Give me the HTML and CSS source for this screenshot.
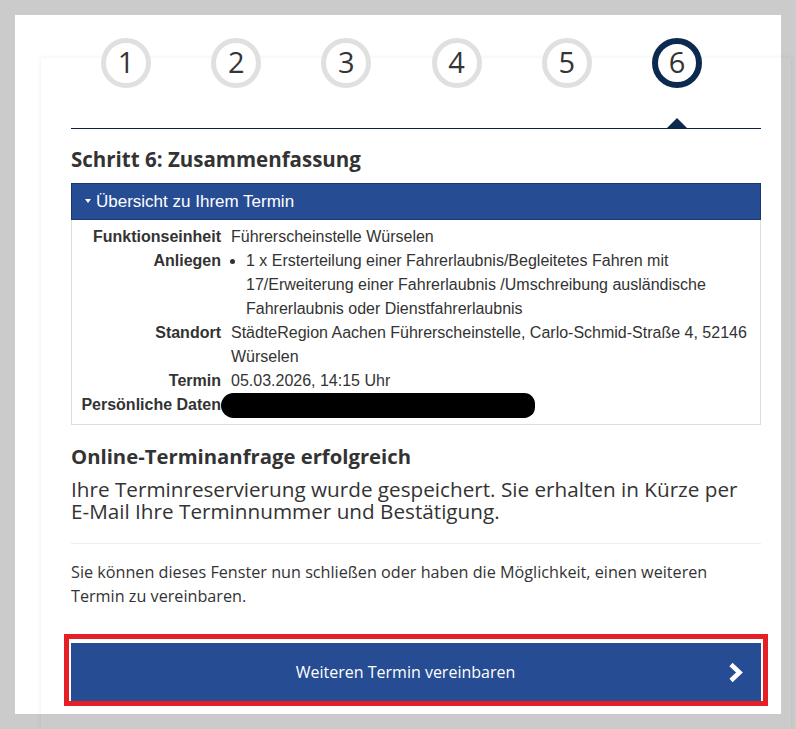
FILE: index.html
```html
<!DOCTYPE html>
<html lang="de">
<head>
<meta charset="utf-8">
<title>Zusammenfassung</title>
<link rel="stylesheet" href="styles.css">
</head>
<body>
<div class="panel">
  <div class="card">
    <div class="steps">
      <div class="step">1</div>
      <div class="step">2</div>
      <div class="step">3</div>
      <div class="step">4</div>
      <div class="step">5</div>
      <div class="step active">6</div>
    </div>

    <h2 class="title">Schritt 6: Zusammenfassung</h2>

    <div class="accordion">
      <div class="acc-head"><span class="caret"></span>Übersicht zu Ihrem Termin</div>
      <div class="acc-body">
        <div class="row">
          <div class="label">Funktionseinheit</div>
          <div class="value">Führerscheinstelle Würselen</div>
        </div>
        <div class="row">
          <div class="label">Anliegen</div>
          <div class="value">
            <ul class="list">
              <li>1 x Ersterteilung einer Fahrerlaubnis/Begleitetes Fahren mit 17/Erweiterung einer Fahrerlaubnis /Umschreibung ausländische Fahrerlaubnis oder Dienstfahrerlaubnis</li>
            </ul>
          </div>
        </div>
        <div class="row">
          <div class="label">Standort</div>
          <div class="value">StädteRegion Aachen Führerscheinstelle, Carlo-Schmid-Straße 4, 52146 Würselen</div>
        </div>
        <div class="row">
          <div class="label">Termin</div>
          <div class="value">05.03.2026, 14:15 Uhr</div>
        </div>
        <div class="row">
          <div class="label">Persönliche Daten</div>
          <div class="value redacted"><span class="blob"></span></div>
        </div>
      </div>
    </div>

    <h2 class="title2">Online-Terminanfrage erfolgreich</h2>
    <p class="lead">Ihre Terminreservierung wurde gespeichert. Sie erhalten in Kürze per <span class="nobr">E-Mail</span> Ihre Terminnummer und Bestätigung.</p>
    <hr class="sep">
    <p class="note">Sie können dieses Fenster nun schließen oder haben die Möglichkeit, einen weiteren Termin zu vereinbaren.</p>

    <div class="mark">
      <button class="btn" type="button">
        <span class="btn-text">Weiteren Termin vereinbaren</span>
        <svg class="chev" width="15" height="23" viewBox="0 0 15 23" aria-hidden="true">
          <polyline points="3,3.5 11.5,11.5 3,19.5" fill="none" stroke="#ffffff" stroke-width="4.6" stroke-linejoin="miter" stroke-linecap="butt"/>
        </svg>
      </button>
    </div>
  </div>
</div>
</body>
</html>
```

FILE: styles.css
```css
html, body {
  margin: 0;
  padding: 0;
}
body {
  background: #cbcbcb;
  width: 796px;
  height: 729px;
  overflow: hidden;
  font-family: "Open Sans", "Noto Sans", sans-serif;
  color: #333333;
}
.panel {
  margin: 15px 0 0 15px;
  width: 766px;
  height: 699px;
  background: #ffffff;
  display: flow-root;
}
.card {
  margin: 43px 0 0 26px;
  width: 750px;
  height: 700px;
  box-sizing: border-box;
  padding: 0 30px;
  display: flex;
  flex-direction: column;
  box-shadow: 0 0 5px rgba(0, 0, 0, 0.07);
}

/* steps */
.steps {
  margin-top: -20px;
  height: 90px;
  border-bottom: 1px solid #0d2344;
  display: flex;
  gap: 60.2px;
  padding-left: 30px;
}
.step {
  width: 50px;
  height: 50px;
  box-sizing: border-box;
  border: 5px solid #e0e0e0;
  border-radius: 50%;
  background: #ffffff;
  display: flex;
  align-items: center;
  justify-content: center;
  font-size: 29px;
  line-height: 1;
  padding-bottom: 3px;
  color: #353535;
  position: relative;
  flex: none;
}
.step.active {
  border: 6px solid #0c2a50;
}
.step.active::after {
  content: "";
  position: absolute;
  top: 74px;
  left: 50%;
  margin-left: -10px;
  border-left: 10px solid transparent;
  border-right: 10px solid transparent;
  border-bottom: 10px solid #0c2a50;
}

/* headings */
.title {
  margin: 17px 0 11px;
  font-size: 20.5px;
  line-height: 26px;
  font-weight: 700;
  color: #333333;
}

/* accordion */
.acc-head {
  height: 37px;
  box-sizing: border-box;
  background: #264c93;
  border: 1px solid #173872;
  color: #ffffff;
  font-family: "Liberation Sans", Arial, sans-serif;
  font-size: 17px;
  display: flex;
  align-items: center;
  padding-left: 13px;
}
.caret {
  width: 0;
  height: 0;
  border-left: 3.5px solid transparent;
  border-right: 3.5px solid transparent;
  border-top: 4px solid #ffffff;
  margin-right: 5px;
  margin-top: -1px;
}
.acc-body {
  border: 1px solid #dddddd;
  border-top: none;
  padding: 5px 10px 6px 9px;
  font-family: "Liberation Sans", Arial, sans-serif;
  font-size: 16px;
  line-height: 24px;
  color: #333333;
}
.row {
  display: grid;
  grid-template-columns: 140px 1fr;
  column-gap: 10px;
}
.label {
  font-weight: 700;
  display: flex;
  justify-content: flex-end;
  white-space: nowrap;
}
.list {
  margin: 0;
  padding-left: 15px;
  list-style: disc;
}
.redacted {
  display: flex;
  align-items: center;
}
.blob {
  display: block;
  width: 314px;
  height: 25px;
  margin-left: -10px;
  background: #000000;
  border-radius: 14px 12px 12px 14px;
}

.title2 {
  margin: 18px 0 0;
  font-size: 20.3px;
  line-height: 26px;
  font-weight: 700;
  color: #333333;
}
.lead {
  margin: 9px 0 0;
  font-size: 20.7px;
  line-height: 22px;
  color: #333333;
}
.nobr {
  white-space: nowrap;
}
.sep {
  margin: 21px 0 0;
  border: 0;
  border-top: 1px solid #eeeeee;
  height: 0;
}
.note {
  margin: 17px 0 0;
  max-width: 670px;
  font-size: 16.2px;
  line-height: 23.5px;
  color: #333333;
}

/* button with red annotation */
.mark {
  margin: 26px -7px 0;
  border: 5px solid #e41f25;
  padding: 4px 2px 0 2px;
}
.btn {
  width: 100%;
  height: 58px;
  background: #264c93;
  border: none;
  color: #ffffff;
  font-family: "Open Sans", "Noto Sans", sans-serif;
  font-size: 16px;
  display: flex;
  align-items: center;
  padding: 0 18px 0 12px;
  margin: 0;
}
.btn-text {
  flex: 1;
  text-align: center;
}
.chev {
  flex: none;
  display: block;
}
```
